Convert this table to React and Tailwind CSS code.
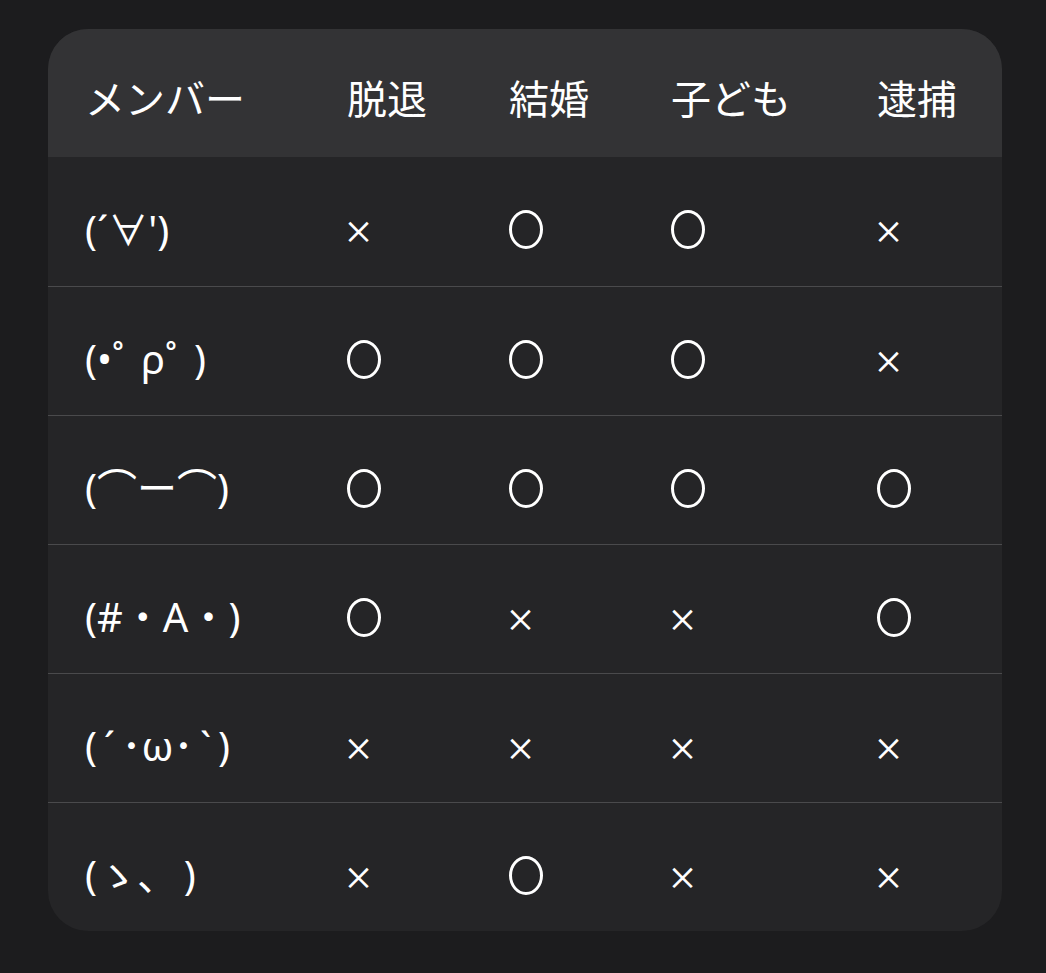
import React from "react";

const headers = ["メンバー", "脱退", "結婚", "子ども", "逮捕"];
const rows = [
  ["(´∀')", "×", "○", "○", "×"],
  ["(•˚\u2009 ρ˚\u2009 )", "○", "○", "○", "×"],
  ["(⌒ー⌒)", "○", "○", "○", "○"],
  ["(#・A・)", "○", "×", "×", "○"],
  ["(\u2009´\u2009･ω･\u2009`\u2009)", "×", "×", "×", "×"],
  ["(ゝ、\u2009)", "×", "○", "×", "×"],
];

const font = { fontFamily: '"Noto Sans CJK JP", "Noto Sans", sans-serif' };
const kaoFont = { fontFamily: '"Noto Sans", "Noto Sans CJK JP", sans-serif' };

function Mark({ v }) {
  if (v === "○") {
    return (
      <span className="inline-block w-[34px] h-[39px] rounded-[50%] border-[3px] border-white" aria-label="○"></span>
    );
  }
  return <span className="text-[31px] font-medium leading-none -ml-[4px]">×</span>;
}

export default function App() {
  return (
    <div className="min-h-[973px] w-full bg-[#1c1c1e] pt-[29px] pl-[48px] pr-[44px] pb-[42px]" style={font}>
      <div className="w-[954px] rounded-[40px] overflow-hidden bg-[#252527] text-white">
        <div className="grid grid-cols-[299px_162px_162px_206px_1fr] h-[128px] bg-[#333335] items-center">
          {headers.map((h, i) => (
            <div key={i} className={`text-[40px] leading-none pt-[8px] ${i === 0 ? "pl-[37px]" : ""}`}>{h}</div>
          ))}
        </div>
        {rows.map((r, ri) => (
          <div
            key={ri}
            className={`grid grid-cols-[299px_162px_162px_206px_1fr] h-[129px] items-center ${ri > 0 ? "border-t border-[#4a4a4c]" : ""}`}
          >
            {r.map((c, ci) => (
              <div
                key={ci}
                className={`leading-none pt-[16px] ${ci === 0 ? "pl-[37px] text-[40px] whitespace-pre" : "flex items-center h-[40px]"}`}
                style={ci === 0 ? kaoFont : undefined}
              >
                {ci === 0 ? c : <Mark v={c} />}
              </div>
            ))}
          </div>
        ))}
      </div>
    </div>
  );
}
